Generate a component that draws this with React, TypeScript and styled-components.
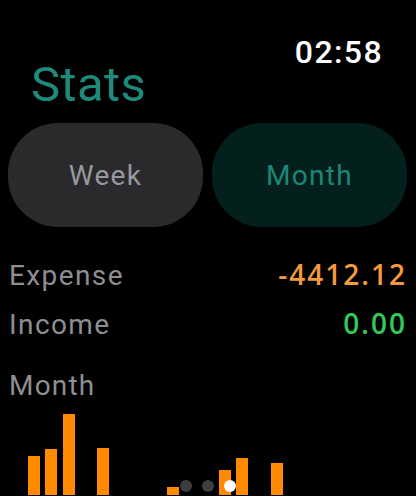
import React from 'react';
import styled, { createGlobalStyle } from 'styled-components';

const GlobalStyle = createGlobalStyle`
  html, body {
    margin: 0;
    padding: 0;
    background: #000;
  }
  body {
    font-family: Roboto, "Noto Sans", "Liberation Sans", sans-serif;
  }
`;

const Screen = styled.div`
  position: relative;
  width: 416px;
  height: 496px;
  overflow: hidden;
  background: #000;
`;

const Header = styled.header`
  display: flex;
  flex-direction: column;
  padding-top: 39px;
`;

const Time = styled.div`
  align-self: flex-end;
  padding-right: 33px;
  color: #fff;
  font-size: 32px;
  line-height: 26px;
  font-weight: 500;
  letter-spacing: 1.4px;
`;

const Title = styled.h1`
  margin: 0;
  padding-left: 31px;
  color: #1d8a7c;
  font-size: 49px;
  line-height: 40px;
  font-weight: 400;
  letter-spacing: 0.4px;
`;

const Segments = styled.div`
  display: grid;
  grid-template-columns: 195px 195px;
  gap: 9px;
  padding-left: 8px;
  margin-top: 18px;
`;

const Segment = styled.button<{ $active?: boolean }>`
  height: 104px;
  border: none;
  border-radius: 50px;
  background: ${(p) => (p.$active ? '#03201d' : '#2a2a2c')};
  color: ${(p) => (p.$active ? '#1e8579' : '#98989e')};
  font-family: inherit;
  font-size: 28px;
  letter-spacing: 1.3px;
  padding: 0;
  cursor: pointer;
`;

const Totals = styled.section`
  margin-top: 23px;
  padding: 0 11px 0 9px;
`;

const TotalRow = styled.div`
  display: flex;
  justify-content: space-between;
  align-items: baseline;
  height: 49px;
  line-height: 49px;
  font-size: 28px;
`;

const Label = styled.span`
  color: #8e8e93;
  letter-spacing: 1.4px;
`;

const Amount = styled.span<{ $tone: 'expense' | 'income' }>`
  color: ${(p) => (p.$tone === 'expense' ? '#f39a3f' : '#34c759')};
  font-family: "Open Sans", Roboto, sans-serif;
  font-weight: 600;
  letter-spacing: 2px;
  margin-right: -2px;
`;

const SectionLabel = styled.div`
  margin-top: 13px;
  padding-left: 9px;
  color: #8e8e93;
  font-size: 28px;
  line-height: 49px;
  letter-spacing: 1.2px;
`;

const Chart = styled.div`
  display: flex;
  align-items: flex-end;
  gap: 5.35px;
  height: 85px;
  padding-left: 28px;
`;

const Bar = styled.div`
  flex: 0 0 12px;
  background: #ff8a00;
`;

const Dots = styled.div`
  position: absolute;
  left: 0;
  right: 0;
  bottom: 4px;
  display: flex;
  justify-content: center;
  gap: 10px;
`;

const Dot = styled.span<{ $active?: boolean }>`
  width: 12px;
  height: 12px;
  border-radius: 50%;
  background: ${(p) => (p.$active ? '#fff' : '#3d3d3f')};
`;

const bars = [39, 46, 81, 0, 47, 0, 0, 0, 8, 0, 0, 25, 37, 0, 32, 0, 0, 0, 0, 0, 0, 0];

const App: React.FC = () => {
  return (
    <Screen>
      <GlobalStyle />
      <Header>
        <Time>02:58</Time>
        <Title>Stats</Title>
      </Header>
      <Segments>
        <Segment>Week</Segment>
        <Segment $active>Month</Segment>
      </Segments>
      <Totals>
        <TotalRow>
          <Label>Expense</Label>
          <Amount $tone="expense">-4412.12</Amount>
        </TotalRow>
        <TotalRow>
          <Label>Income</Label>
          <Amount $tone="income">0.00</Amount>
        </TotalRow>
      </Totals>
      <SectionLabel>Month</SectionLabel>
      <Chart>
        {bars.map((h, i) => (
          <Bar key={i} style={{ height: h }} />
        ))}
      </Chart>
      <Dots>
        <Dot />
        <Dot />
        <Dot $active />
      </Dots>
    </Screen>
  );
};

export default App;
